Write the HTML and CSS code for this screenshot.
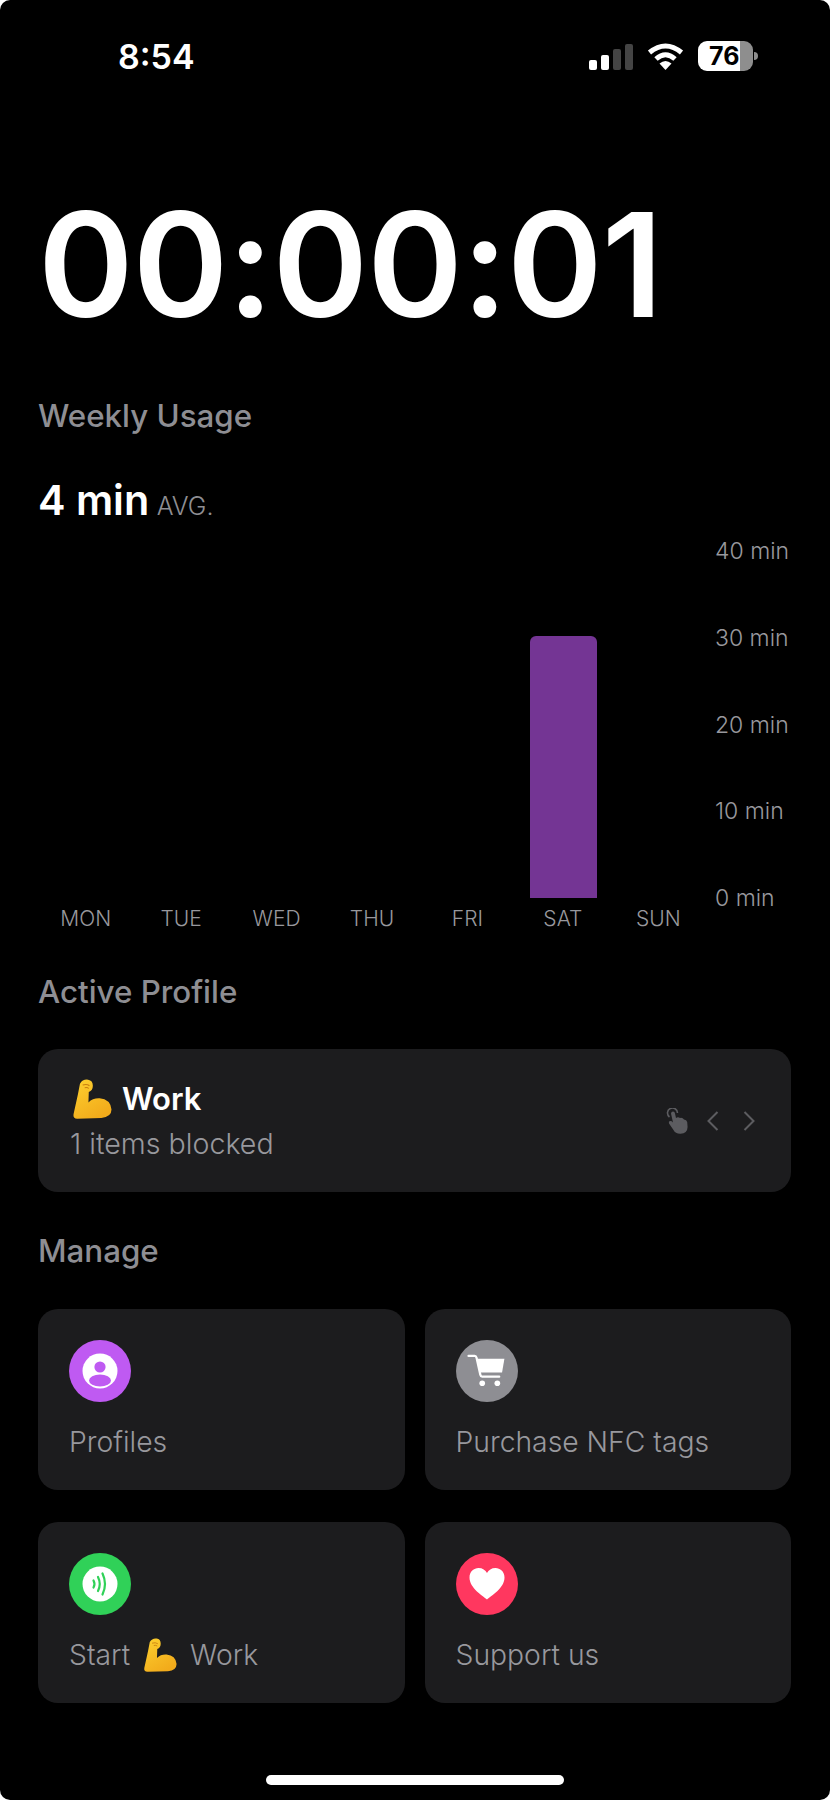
FILE: index.html
```html
<!DOCTYPE html>
<html lang="en">
<head>
    <meta charset="UTF-8">
    <meta name="viewport" content="width=device-width, initial-scale=1.0">
    <title>Weekly Usage</title>
    <link rel="stylesheet" href="styles.css">
</head>
<body>
    <svg class="defs" width="0" height="0">
        <defs>
            <linearGradient id="armFill" x1="0" y1="0" x2="0.6" y2="1">
                <stop offset="0" stop-color="#fdd02f"/>
                <stop offset="1" stop-color="#f2ab1b"/>
            </linearGradient>
            <symbol id="muscle" viewBox="0 0 115 118">
                <path fill="url(#armFill)" d="M22 14 Q30 0 46 2 Q60 4 60 20 Q60 34 48 38 L47 69 Q60 56 80 57 Q112 60 115 90 Q115 112 85 115 L14 117 Q1 117 3 104 L16 45 Z"/>
                <path fill="none" stroke="#c97f10" stroke-width="3" d="M30 18 Q42 14 50 20 M36 26 Q44 24 48 28"/>
            </symbol>
        </defs>
    </svg>

    <div class="statusbar">
        <span class="clock">8:54</span>
        <div class="status-icons">
            <div class="signal">
                <span class="sig sig1"></span>
                <span class="sig sig2"></span>
                <span class="sig sig3"></span>
                <span class="sig sig4"></span>
            </div>
            <svg class="wifi" viewBox="0 0 37 28">
                <path fill="none" stroke="#fff" stroke-width="5" d="M2.5 10.5 Q18.5 -2.5 34.5 10.5"/>
                <path fill="none" stroke="#fff" stroke-width="5" d="M9 17 Q18.5 8.5 28 17"/>
                <path fill="#fff" d="M12.5 21.5 Q18.5 16.5 24.5 21.5 L18.5 28 Z"/>
            </svg>
            <div class="battery">
                <div class="battery-body"><span class="battery-num">76</span></div>
                <span class="battery-nub"></span>
            </div>
        </div>
    </div>

    <div class="timer">00:00:01</div>

    <h2 class="section weekly">Weekly Usage</h2>
    <div class="avg"><b>4 min</b> <span>AVG.</span></div>

    <div class="chart">
        <div class="plot">
            <div class="col"></div>
            <div class="col"></div>
            <div class="col"></div>
            <div class="col"></div>
            <div class="col"></div>
            <div class="col"><div class="bar" style="height: 262px"></div></div>
            <div class="col"></div>
        </div>
        <div class="yaxis">
            <span>40 min</span>
            <span>30 min</span>
            <span>20 min</span>
            <span>10 min</span>
            <span>0 min</span>
        </div>
        <div class="days">
            <span>MON</span><span>TUE</span><span>WED</span><span>THU</span><span>FRI</span><span>SAT</span><span>SUN</span>
        </div>
    </div>

    <h2 class="section active-head">Active Profile</h2>
    <div class="card profile">
        <div class="profile-text">
            <div class="profile-name"><svg class="emoji-big"><use href="#muscle"/></svg><b>Work</b></div>
            <div class="profile-sub">1 items blocked</div>
        </div>
        <div class="profile-ctrl">
            <svg class="hand" viewBox="0 0 22 26">
                <path fill="none" stroke="#5c5c60" stroke-width="1.6" d="M3.5 9 A5 5 0 1 1 11.5 5"/>
                <path fill="#5c5c60" d="M5 5.5 Q5.2 3.6 7 3.6 Q8.8 3.6 9 5.5 L10 10 Q12 8.6 14 10 Q16.5 9.4 18 11.4 Q20.6 11.4 21.2 14 L21.6 19 Q21.4 25.5 14.5 25.8 Q9.5 26 7.5 22 L3 15.5 Q2.2 13.4 4 13 Q5.5 12.8 7 14.4 Z"/>
            </svg>
            <svg class="chev" viewBox="0 0 12 20"><path d="M10.5 1 L1.5 10 L10.5 19"/></svg>
            <svg class="chev chev-r" viewBox="0 0 12 20"><path d="M1.5 1 L10.5 10 L1.5 19"/></svg>
        </div>
    </div>

    <h2 class="section manage-head">Manage</h2>
    <div class="tiles">
        <div class="card tile">
            <div class="circle purple">
                <svg viewBox="0 0 36 36">
                    <circle cx="18" cy="18" r="17.5" fill="#fff"/>
                    <circle cx="18" cy="14" r="5.6" fill="#bf5af2"/>
                    <ellipse cx="18" cy="27.5" rx="11" ry="6" fill="#bf5af2"/>
                </svg>
            </div>
            <div class="tile-label">Profiles</div>
        </div>
        <div class="card tile">
            <div class="circle grey">
                <svg class="cart" viewBox="0 0 40 36">
                    <path fill="none" stroke="#fff" stroke-width="2.4" stroke-linecap="round" d="M1.5 2 H8 Q9.5 2 10 4 L14 22 Q14.4 24 16 24 H34"/>
                    <path fill="#fff" d="M10.5 5 H39.5 L37 19.6 H13.5 Z"/>
                    <circle cx="16" cy="31" r="3" fill="#fff"/>
                    <circle cx="32" cy="31" r="3" fill="#fff"/>
                </svg>
            </div>
            <div class="tile-label">Purchase NFC tags</div>
        </div>
        <div class="card tile">
            <div class="circle green">
                <svg viewBox="0 0 36 36">
                    <circle cx="18" cy="18" r="17.5" fill="#fff"/>
                    <g fill="none" stroke="#30d158" stroke-width="2.2" stroke-linecap="round">
                        <path d="M11.5 14.5 Q13.5 18 11.5 21.5"/>
                        <path d="M16 11 Q19.5 18 16 25"/>
                        <path d="M20.5 7.5 Q25.5 18 20.5 28.5"/>
                    </g>
                </svg>
            </div>
            <div class="tile-label start-label">Start <svg class="emoji-small"><use href="#muscle"/></svg> Work</div>
        </div>
        <div class="card tile">
            <div class="circle pink">
                <svg viewBox="0 0 36 32">
                    <path fill="#fff" d="M18 31.5 C14 28 0.5 20 0.5 9.5 C0.5 3.5 5 0 9.5 0 C13.5 0 16.5 2 18 5 C19.5 2 22.5 0 26.5 0 C31 0 35.5 3.5 35.5 9.5 C35.5 20 22 28 18 31.5 Z"/>
                </svg>
            </div>
            <div class="tile-label">Support us</div>
        </div>
    </div>

    <div class="home-bar"></div>
</body>
</html>
```

FILE: styles.css
```css
* {
    box-sizing: border-box;
}
html {
    background: #fff;
}
body {
    margin: 0;
    width: 830px;
    height: 1800px;
    padding: 0 39px 0 38px;
    background: #000;
    border-radius: 10px;
    color: #fff;
    font-family: Inter, "Liberation Sans", sans-serif;
    overflow: hidden;
}
.defs {
    display: block;
    height: 0;
}
.statusbar {
    display: flex;
    justify-content: space-between;
    align-items: center;
    height: 30px;
    margin-top: 41px;
    padding-left: 80px;
}
.clock {
    font-size: 34px;
    font-weight: 600;
}
.status-icons {
    display: flex;
    align-items: center;
    margin-right: 33px;
}
.signal {
    display: flex;
    align-items: flex-end;
    gap: 4px;
    height: 26px;
    margin-right: 14px;
    margin-top: 2px;
}
.sig {
    width: 8px;
    border-radius: 2px;
    background: #fff;
}
.sig1 { height: 10px; }
.sig2 { height: 15px; }
.sig3 { height: 21px; background: #444; }
.sig4 { height: 26px; background: #444; }
.wifi {
    width: 37px;
    height: 28px;
    margin-right: 14px;
}
.battery {
    display: flex;
    align-items: center;
}
.battery-body {
    width: 55px;
    height: 30px;
    border-radius: 9px;
    background: linear-gradient(90deg, #fff 76%, #8e8e8e 76%);
    display: flex;
    align-items: center;
    padding-left: 11px;
}
.battery-num {
    color: #000;
    font-size: 25px;
    font-weight: 700;
}
.battery-nub {
    width: 4px;
    height: 8px;
    margin-left: 1px;
    border-radius: 0 4px 4px 0;
    background: #8e8e8e;
}
.timer {
    margin-top: 119px;
    font-size: 145px;
    line-height: 150px;
    font-weight: 600;
    letter-spacing: -1px;
    white-space: nowrap;
}
.section {
    margin: 0;
    font-size: 31.3px;
    line-height: 36px;
    font-weight: 500;
    color: #8e8e93;
}
.weekly {
    margin-top: 58px;
}
.avg {
    margin-top: 42px;
    line-height: 48px;
}
.avg b {
    font-size: 41.3px;
    font-weight: 600;
}
.avg span {
    font-size: 25px;
    font-weight: 300;
    color: #8e8e93;
    margin-left: 3px;
}
.chart {
    display: grid;
    grid-template-columns: 668px 1fr;
    grid-template-rows: 360px 40px;
    margin-top: 5px;
}
.plot {
    display: grid;
    grid-template-columns: repeat(7, 1fr);
    height: 360px;
}
.col {
    display: flex;
    justify-content: center;
    align-items: flex-end;
}
.bar {
    width: 67px;
    margin-left: 2px;
    background: #743594;
    border-radius: 6px 6px 0 0;
}
.yaxis {
    display: flex;
    flex-direction: column;
    justify-content: space-between;
    height: 375px;
    margin-top: -1px;
    padding-left: 9px;
    font-size: 23px;
    line-height: 28px;
    font-weight: 300;
    color: #98989d;
    white-space: nowrap;
}
.days {
    display: grid;
    grid-template-columns: repeat(7, 1fr);
    align-items: center;
    text-align: center;
    font-size: 21px;
    font-weight: 300;
    color: #98989d;
}
.active-head {
    margin-top: 36px;
}
.card {
    background: #1c1c1e;
    border-radius: 20px;
}
.profile {
    display: flex;
    justify-content: space-between;
    align-items: center;
    height: 143px;
    margin-top: 39px;
    padding: 0 36px 0 32px;
}
.profile-name {
    display: flex;
    align-items: center;
    gap: 10px;
    height: 42px;
    margin-top: -2px;
    font-size: 31px;
}
.profile-name b {
    font-weight: 600;
}
.emoji-big {
    width: 40px;
    height: 40px;
    margin-left: 2px;
}
.profile-sub {
    margin-top: 6px;
    font-size: 28.6px;
    line-height: 36px;
    font-weight: 300;
    color: #98989d;
}
.profile-ctrl {
    display: flex;
    align-items: center;
    gap: 24px;
}
.hand {
    width: 22px;
    height: 26px;
    margin-right: -5px;
}
.chev {
    width: 12px;
    height: 20px;
}
.chev path {
    fill: none;
    stroke: #5c5c60;
    stroke-width: 2;
}
.manage-head {
    margin-top: 41px;
}
.tiles {
    display: grid;
    grid-template-columns: 1fr 1fr;
    gap: 32px 20px;
    margin-top: 40px;
}
.tile {
    height: 181px;
    padding: 31px 31px 0;
}
.circle {
    display: flex;
    justify-content: center;
    align-items: center;
    width: 62px;
    height: 62px;
    border-radius: 50%;
}
.circle svg {
    width: 36px;
    height: 36px;
}
.circle .cart {
    width: 38px;
    height: 34px;
    margin-left: -2px;
}
.purple { background: #bf5af2; }
.grey { background: #8e8e93; }
.green { background: #30d158; }
.pink { background: #ff375f; }
.tile-label {
    display: flex;
    align-items: center;
    gap: 13px;
    margin-top: 22px;
    font-size: 28.3px;
    line-height: 36px;
    font-weight: 300;
    color: #98989d;
    white-space: nowrap;
}
.emoji-small {
    width: 34px;
    height: 34px;
}
.home-bar {
    width: 298px;
    height: 10px;
    margin: 72px auto 0;
    border-radius: 5px;
    background: #fff;
}
```
